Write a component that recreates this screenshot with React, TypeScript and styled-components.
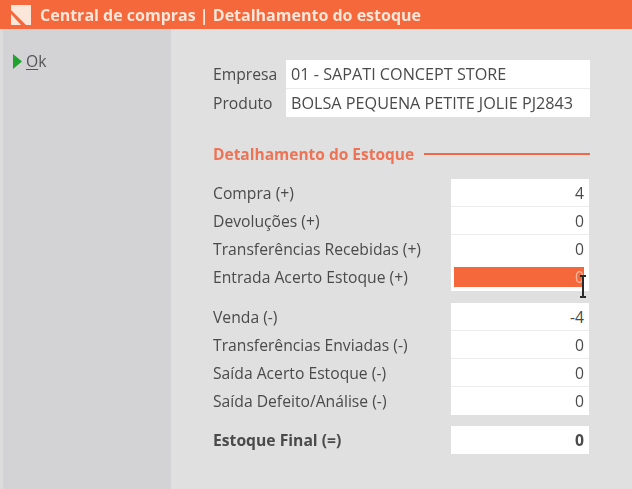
import styled, { createGlobalStyle } from 'styled-components'

const GlobalStyle = createGlobalStyle`
  html, body {
    margin: 0;
    padding: 0;
    background: #e0e0e0;
  }
  * {
    box-sizing: border-box;
  }
`

const Window = styled.div`
  width: 632px;
  height: 489px;
  overflow: hidden;
  display: flex;
  flex-direction: column;
  font-family: "Open Sans", "Liberation Sans", sans-serif;
  font-size: 15.7px;
  color: #4a4a4a;
  filter: blur(0.4px);
`

const TitleBar = styled.div`
  height: 29px;
  flex: none;
  display: flex;
  align-items: center;
  gap: 8px;
  padding-left: 10px;
  background: #f4683c;
  color: #fbe6da;
  font-size: 16px;
  font-weight: 700;
`

const Body = styled.div`
  flex: 1;
  display: flex;
`

const Sidebar = styled.div`
  width: 171px;
  flex: none;
  padding: 22px 0 0 10px;
  background: #d3d3d5;
  border-left: 3px solid #dcdcdc;
`

const OkButton = styled.div`
  display: flex;
  align-items: center;
  gap: 4px;
  height: 20px;
  color: #555;

  u {
    text-underline-offset: 2px;
  }
`

const Content = styled.div`
  flex: 1;
  padding: 31px 0 0 42px;
  display: flex;
  flex-direction: column;
`

const HeaderGrid = styled.div`
  display: grid;
  grid-template-columns: 73px 304px;
  grid-auto-rows: 28.5px;
  width: 377px;
`

const HeaderLabel = styled.div`
  display: flex;
  align-items: center;
`

const HeaderValue = styled.div<{ $last?: boolean }>`
  display: flex;
  align-items: center;
  padding-left: 5px;
  background: #fff;
  font-size: 16.2px;
  white-space: nowrap;
  border-bottom: ${p => (p.$last ? 'none' : '1px solid #ececec')};
`

const SectionTitle = styled.div`
  display: flex;
  align-items: center;
  gap: 10px;
  width: 377px;
  height: 20px;
  margin-top: 27px;
  color: #ee7355;
  font-size: 15.5px;
  font-weight: 700;
  white-space: nowrap;
`

const SectionLine = styled.div`
  flex: 1;
  height: 2px;
  background: #ef6a48;
`

const Group = styled.div<{ $gap: number }>`
  margin-top: ${p => p.$gap}px;
  display: flex;
  flex-direction: column;
  width: 376px;
`

const Row = styled.div`
  height: 28px;
  display: grid;
  grid-template-columns: 238px 138px;
  align-items: stretch;
`

const RowLabel = styled.div<{ $bold?: boolean }>`
  display: flex;
  align-items: center;
  white-space: nowrap;
  font-weight: ${p => (p.$bold ? 700 : 400)};
`

const ValueCell = styled.div<{ $bold?: boolean; $last?: boolean }>`
  position: relative;
  display: flex;
  align-items: center;
  justify-content: flex-end;
  padding-right: 5px;
  background: #fff;
  border-bottom: ${p => (p.$last ? 'none' : '1px solid #ececec')};
  font-weight: ${p => (p.$bold ? 700 : 400)};
`

const Highlight = styled.div`
  position: absolute;
  left: 3px;
  right: 5px;
  top: 4px;
  bottom: 4px;
  display: flex;
  align-items: center;
  justify-content: flex-end;
  background: #f4683c;
  color: #f6b9a0;
`

const Cursor = styled.svg`
  position: absolute;
  right: 1px;
  top: 12px;
  width: 10px;
  height: 23px;
`

const Logo = () => (
  <svg width="22" height="20" viewBox="0 0 22 20">
    <path d="M1 0h20v20h-5L1 5z" fill="#fbe6da" />
    <path d="M1 9l10 11H1z" fill="#fbe6da" />
  </svg>
)

const Stock = ({ items }: { items: [string, string][] }) => (
  <>
    {items.map(([label, value], i) => (
      <Row key={label}>
        <RowLabel>{label}</RowLabel>
        <ValueCell $last={i === items.length - 1}>{value}</ValueCell>
      </Row>
    ))}
  </>
)

const App = () => {
  return (
    <Window>
      <GlobalStyle />
      <TitleBar>
        <Logo />
        Central de compras | Detalhamento do estoque
      </TitleBar>
      <Body>
        <Sidebar>
          <OkButton>
            <svg width="9" height="15" viewBox="0 0 9 15">
              <path d="M0 0l9 7.5L0 15z" fill="#1fa32c" />
            </svg>
            <span><u>O</u>k</span>
          </OkButton>
        </Sidebar>
        <Content>
          <HeaderGrid>
            <HeaderLabel>Empresa</HeaderLabel>
            <HeaderValue>01 - SAPATI CONCEPT STORE</HeaderValue>
            <HeaderLabel>Produto</HeaderLabel>
            <HeaderValue $last>BOLSA PEQUENA PETITE JOLIE PJ2843</HeaderValue>
          </HeaderGrid>

          <SectionTitle>
            Detalhamento do Estoque
            <SectionLine />
          </SectionTitle>

          <Group $gap={15}>
            <Stock items={[['Compra (+)', '4'], ['Devoluções (+)', '0'], ['Transferências Recebidas (+)', '0']]} />
            <Row>
              <RowLabel>Entrada Acerto Estoque (+)</RowLabel>
              <ValueCell $last>
                <Highlight>0</Highlight>
                <Cursor viewBox="0 0 10 23">
                  <path d="M2 1h6M5 1v21M2 22h6" stroke="#2a2a2a" strokeWidth="2" fill="none" />
                </Cursor>
              </ValueCell>
            </Row>
          </Group>

          <Group $gap={12}>
            <Stock items={[['Venda (-)', '-4'], ['Transferências Enviadas (-)', '0'], ['Saída Acerto Estoque (-)', '0'], ['Saída Defeito/Análise (-)', '0']]} />
          </Group>

          <Group $gap={11}>
            <Row>
              <RowLabel $bold>Estoque Final (=)</RowLabel>
              <ValueCell $bold $last>0</ValueCell>
            </Row>
          </Group>
        </Content>
      </Body>
    </Window>
  )
}

export default App
